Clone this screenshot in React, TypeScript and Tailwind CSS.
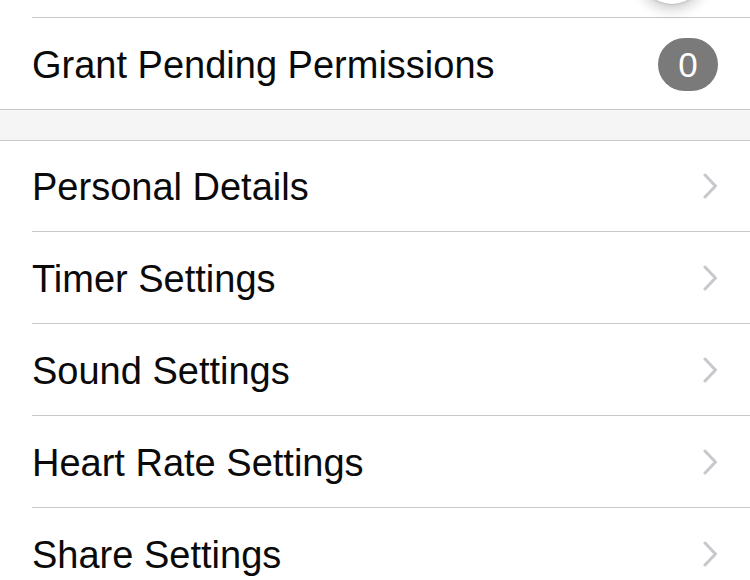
import React from 'react';

const font = { fontFamily: '"Liberation Sans", Arial, sans-serif' };

function Chevron() {
  return (
    <svg width="16" height="26" viewBox="0 0 16 26" fill="none" className="shrink-0">
      <path d="M3 2l10.5 11L3 24" stroke="#c7c7cc" strokeWidth="3" strokeLinecap="round" strokeLinejoin="round" />
    </svg>
  );
}

function Row({ label, last, h = 'h-[92px]', children }: { label: string; last?: boolean; h?: string; children?: React.ReactNode }) {
  return (
    <div className={last ? 'border-b border-[#c8c7cc]' : ''}>
      <div className={`ml-[32px] ${h} flex items-center pr-[32px] ${last ? '' : 'border-b border-[#c8c7cc]'}`}>
        <span className="flex-1 text-[38px] text-[#0a0a0a] leading-none translate-y-[1px]">{label}</span>
        {children}
      </div>
    </div>
  );
}

export default function App() {
  return (
    <div className="w-[750px] h-[580px] overflow-hidden bg-white" style={font}>
      {/* row cut off at the top, only the switch's lower edge shows */}
      <div className="relative -mt-[74px]">
        <Row label="" />
        <div className="absolute left-[640px] top-[14px] w-[64px] h-[64px] rounded-full bg-white shadow-[0_5px_14px_rgba(0,0,0,0.22),0_1px_2px_rgba(0,0,0,0.12)]" />
      </div>
      <Row label="Grant Pending Permissions" last h="h-[91px]">
        <div className="w-[60px] h-[53px] rounded-full bg-[#7a7a7a] text-white text-[35px] flex items-center justify-center leading-none translate-y-[1px]">
          0
        </div>
      </Row>
      <div className="h-[31px] bg-[#f5f5f5] border-b border-[#c8c7cc]" />
      <Row label="Personal Details" h="h-[91px]"><Chevron /></Row>
      <Row label="Timer Settings"><Chevron /></Row>
      <Row label="Sound Settings"><Chevron /></Row>
      <Row label="Heart Rate Settings"><Chevron /></Row>
      <Row label="Share Settings"><Chevron /></Row>
    </div>
  );
}
